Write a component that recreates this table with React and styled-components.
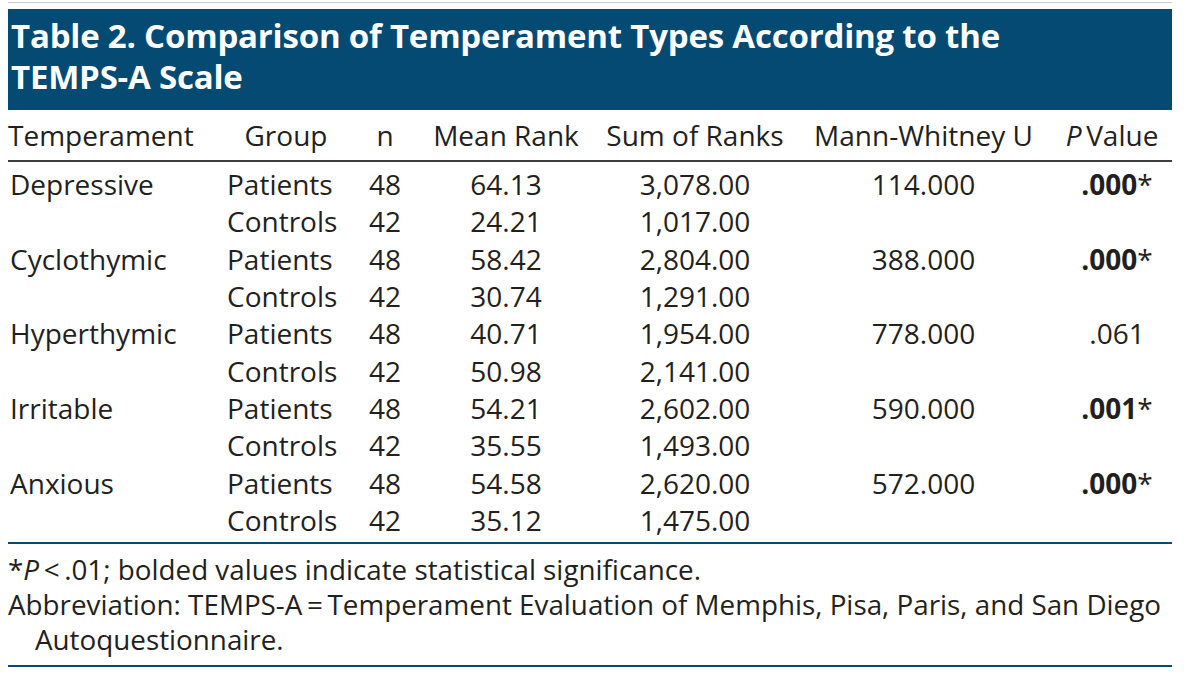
import React from "react";
import styled, { createGlobalStyle } from "styled-components";

const GlobalStyle = createGlobalStyle`
  html, body {
    margin: 0;
    padding: 0;
    background: #ffffff;
  }
  body {
    font-family: "Open Sans", "Noto Sans", sans-serif;
    color: #231f20;
  }
`;

const Page = styled.div`
  width: 1164px;
  margin-left: 8px;
  padding-top: 2px;
`;

const TopRule = styled.div`
  height: 1px;
  background: #c9ccce;
  margin-bottom: 6px;
`;

const TitleBar = styled.div`
  background: #044a73;
  color: #ffffff;
  height: 101px;
  box-sizing: border-box;
  padding: 6px 3px 0;
  font-weight: 700;
  font-size: 33px;
  line-height: 41px;
  letter-spacing: -0.2px;
  white-space: nowrap;
`;

const Table = styled.table`
  width: 100%;
  border-collapse: collapse;
  table-layout: fixed;
  font-size: 28px;
`;

const HeadCell = styled.th`
  font-weight: 400;
  height: 50px;
  padding: 0;
  text-align: ${(p) => p.$align || "center"};
  border-bottom: 2px solid #3d3d3d;
  white-space: nowrap;
`;

const Cell = styled.td`
  padding: 0 0 0 ${(p) => p.$pad || 0}px;
  line-height: 37.33px;
  text-align: ${(p) => p.$align || "center"};
  white-space: nowrap;
`;

const FirstRow = styled.tr`
  td {
    padding-top: 4px;
  }
`;

const LastRow = styled.tr`
  td {
    padding-bottom: 3px;
  }
`;

const Sig = styled.b`
  font-weight: 700;
`;

const Notes = styled.div`
  border-top: 2px solid #044a73;
  border-bottom: 2px solid #044a73;
  padding: 8px 0 8px;
  font-size: 27.8px;
  line-height: 35px;
  white-space: nowrap;
`;

const Note = styled.p`
  margin: 0;
  padding-left: ${(p) => (p.$hang ? 27 : 0)}px;
  text-indent: ${(p) => (p.$hang ? -27 : 0)}px;
`;

const cols = [211, 134, 64, 178, 200, 257, 120];

const data = [
  ["Depressive", "64.13", "3,078.00", "24.21", "1,017.00", "114.000", ".000", true],
  ["Cyclothymic", "58.42", "2,804.00", "30.74", "1,291.00", "388.000", ".000", true],
  ["Hyperthymic", "40.71", "1,954.00", "50.98", "2,141.00", "778.000", ".061", false],
  ["Irritable", "54.21", "2,602.00", "35.55", "1,493.00", "590.000", ".001", true],
  ["Anxious", "54.58", "2,620.00", "35.12", "1,475.00", "572.000", ".000", true],
];

export default function App() {
  return (
    <Page>
      <GlobalStyle />
      <TopRule />
      <TitleBar>
        Table 2. Comparison of Temperament Types According to the
        <br />
        TEMPS-A Scale
      </TitleBar>
      <Table>
        <colgroup>
          {cols.map((w, i) => (
            <col key={i} style={{ width: w }} />
          ))}
        </colgroup>
        <thead>
          <tr>
            <HeadCell $align="left">Temperament</HeadCell>
            <HeadCell>Group</HeadCell>
            <HeadCell>n</HeadCell>
            <HeadCell>Mean Rank</HeadCell>
            <HeadCell>Sum of Ranks</HeadCell>
            <HeadCell>Mann-Whitney U</HeadCell>
            <HeadCell>
              <i>P</i>&#8201;Value
            </HeadCell>
          </tr>
        </thead>
        <tbody>
          {data.map((r, i) => {
            const Top = i === 0 ? FirstRow : "tr";
            const Bottom = i === data.length - 1 ? LastRow : "tr";
            return (
              <React.Fragment key={r[0]}>
                <Top>
                  <Cell $align="left" $pad={2}>{r[0]}</Cell>
                  <Cell $align="left" $pad={8}>Patients</Cell>
                  <Cell>48</Cell>
                  <Cell>{r[1]}</Cell>
                  <Cell>{r[2]}</Cell>
                  <Cell>{r[5]}</Cell>
                  <Cell $pad={10}>
                    {r[7] ? (
                      <>
                        <Sig>{r[6]}</Sig>*
                      </>
                    ) : (
                      r[6]
                    )}
                  </Cell>
                </Top>
                <Bottom>
                  <Cell />
                  <Cell $align="left" $pad={8}>Controls</Cell>
                  <Cell>42</Cell>
                  <Cell>{r[3]}</Cell>
                  <Cell>{r[4]}</Cell>
                  <Cell />
                  <Cell />
                </Bottom>
              </React.Fragment>
            );
          })}
        </tbody>
      </Table>
      <Notes>
        <Note>
          *<i>P</i>&#8201;&lt;&#8201;.01; bolded values indicate statistical significance.
        </Note>
        <Note $hang>
          Abbreviation: TEMPS-A&#8201;=&#8201;Temperament Evaluation of Memphis, Pisa, Paris, and San Diego
          <br />
          Autoquestionnaire.
        </Note>
      </Notes>
    </Page>
  );
}
